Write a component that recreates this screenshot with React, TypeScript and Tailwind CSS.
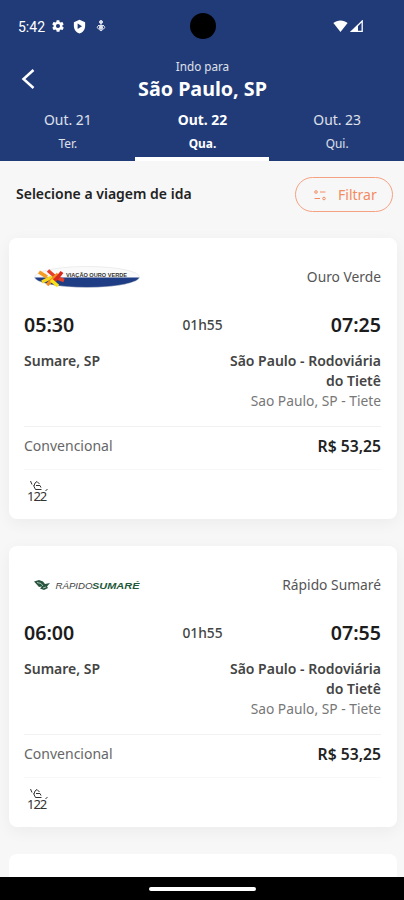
import clsx from 'clsx';

type Day = { date: string; weekday: string; active?: boolean };

type Trip = {
  company: string;
  logo: 'ouroVerde' | 'rapidoSumare';
  departure: string;
  arrival: string;
  duration: string;
  price: string;
};

const DAYS: Day[] = [
  { date: 'Out. 21', weekday: 'Ter.' },
  { date: 'Out. 22', weekday: 'Qua.', active: true },
  { date: 'Out. 23', weekday: 'Qui.' },
];

const TRIPS: Trip[] = [
  {
    company: 'Ouro Verde',
    logo: 'ouroVerde',
    departure: '05:30',
    arrival: '07:25',
    duration: '01h55',
    price: 'R$ 53,25',
  },
  {
    company: 'Rápido Sumaré',
    logo: 'rapidoSumare',
    departure: '06:00',
    arrival: '07:55',
    duration: '01h55',
    price: 'R$ 53,25',
  },
];

const StatusBar = () => (
  <div className="relative flex h-[52px] items-center justify-between pl-[18px] pr-[41px]">
    <div className="flex items-center">
      <span className="w-[33px] pt-[2px] font-['Roboto'] text-[14px] leading-none">5:42</span>
      <svg className="h-[14px] w-[14px]" viewBox="0 0 24 24" fill="currentColor">
        <path d="M19.400 13a7.500 7.500 0 0 0 0-2l2.100-1.600a.5.5 0 0 0 .1-.6l-2-3.500a.5.5 0 0 0-.6-.2l-2.500 1a7.300 7.300 0 0 0-1.700-1l-.4-2.700A.5.5 0 0 0 14 2h-4a.5.5 0 0 0-.5.4l-.4 2.700a7.300 7.300 0 0 0-1.700 1l-2.500-1a.5.5 0 0 0-.6.2l-2 3.500a.5.5 0 0 0 .1.6L4.600 11a7.500 7.500 0 0 0 0 2l-2.100 1.600a.5.5 0 0 0-.1.6l2 3.500c.1.200.4.300.6.200l2.500-1c.5.400 1.100.7 1.700 1l.4 2.700c0 .2.200.4.500.4h4c.2 0 .5-.2.500-.4l.4-2.700c.6-.3 1.200-.6 1.700-1l2.500 1c.2.100.5 0 .6-.2l2-3.500a.5.5 0 0 0-.1-.6zM12 15.500a3.500 3.500 0 1 1 0-7 3.500 3.500 0 0 1 0 7z" />
      </svg>
      <svg className="ml-[7px] h-[15px] w-[15px]" viewBox="0 0 24 24">
        <path fill="currentColor" d="M12 1 3 5v6c0 5.500 3.800 10.700 9 12 5.200-1.300 9-6.500 9-12V5z" />
        <path fill="#213b78" d="m9 7 7 4.500L9 16z" />
      </svg>
      <svg
        className="ml-[8px] h-[12px] w-[12px] opacity-85"
        viewBox="0 0 24 24"
        fill="none"
        stroke="currentColor"
        strokeWidth="2"
      >
        <circle cx="12" cy="4" r="3" fill="currentColor" />
        <path d="M12 7v4M6 11h12M4 15l8 7 8-7-3-4H7z" />
        <path d="M9 13h6v4l-3 2-3-2z" fill="currentColor" />
      </svg>
    </div>
    <div className="flex items-center gap-[2px]">
      <svg className="h-[12px] w-[15px]" viewBox="0 0 15 12" fill="currentColor">
        <path d="M.4 3C4.300-.4 10.700-.4 14.600 3L7.500 12z" />
      </svg>
      <svg className="h-[12px] w-[13px]" viewBox="0 0 13 12">
        <path d="M1.800 11.300h10.400V1z" fill="none" stroke="currentColor" strokeWidth="1.300" />
        <path d="M0 12 8 4.500V12z" fill="currentColor" />
      </svg>
    </div>
    <div className="absolute left-[190px] top-[13px] h-[26px] w-[26px] rounded-full bg-black" />
  </div>
);

const Header = () => (
  <header className="h-[161px] bg-[#213b78] text-white">
    <StatusBar />
    <div className="relative flex h-[56px] flex-col items-center pl-px pt-[6px]">
      <svg
        className="absolute left-[21px] top-[17px] h-[20px] w-[14px]"
        viewBox="0 0 14 20"
        fill="none"
        stroke="currentColor"
        strokeWidth="2.500"
      >
        <path d="M12.500 1 2.500 10l10 9" />
      </svg>
      <span className="text-[11.700px] leading-[16px] text-white/85">Indo para</span>
      <h1 className="text-[19.700px] font-bold leading-[29px]">São Paulo, SP</h1>
    </div>
    <nav className="grid h-[53px] grid-cols-3">
      {DAYS.map(({ date, weekday, active }) => (
        <div
          key={date}
          className={clsx(
            'flex flex-col items-center border-b-4 pl-px pt-[2px]',
            active ? 'border-white font-bold' : 'border-transparent text-white/85',
          )}
        >
          <span className="text-[13.900px] leading-[20px]">{date}</span>
          <span className="mt-[4px] text-[11.900px] leading-[18px]">{weekday}</span>
        </div>
      ))}
    </nav>
  </header>
);

const OuroVerdeLogo = () => (
  <svg className="h-[24px] w-[106px]" viewBox="0 0 106 24">
    <clipPath id="oval">
      <ellipse cx="53" cy="12" rx="52.500" ry="10.500" />
    </clipPath>
    <g clipPath="url(#oval)">
      <rect width="106" height="24" fill="#fafafa" />
      <rect y="12.500" width="106" height="12" fill="#1e3d84" />
    </g>
    <ellipse cx="53" cy="12" rx="52.500" ry="10.500" fill="none" stroke="#ddd" strokeWidth=".5" />
    <g fill="none" strokeWidth="3.600">
      <path d="m5 7 8 5" stroke="#f59a23" />
      <path d="m14 5.500 8 7 8 3" stroke="#e5402a" />
      <path d="m8 17 10-5" stroke="#f7d71e" />
      <path d="m13 20 11-11" stroke="#f28c1e" />
      <path d="m20 16 4-4 4-5" stroke="#d9281e" />
      <path d="m17 15 7 6" stroke="#f9e21a" />
    </g>
    <text
      x="32"
      y="11.500"
      fill="#333"
      fontFamily="Liberation Sans, sans-serif"
      fontSize="6"
      fontWeight="bold"
      textLength="61"
      lengthAdjust="spacingAndGlyphs"
    >
      VIAÇÃO OURO VERDE
    </text>
  </svg>
);

const RapidoSumareLogo = () => (
  <svg className="h-[24px] w-[106px]" viewBox="0 0 106 24">
    <path
      d="M0 8.500 5 7l4 1.500 2 2.500 5-1-3 3.500 1 1.500-4 2-4-1.500 2-2-3 .5z"
      fill="#28553f"
    />
    <path d="m3 9.500 4 1 2 2.500M9 15l3-1" stroke="#b9cbc0" strokeWidth=".9" fill="none" />
    <text
      x="21.500"
      y="16"
      fill="#444"
      fontFamily="Liberation Sans, sans-serif"
      fontSize="9.500"
      fontStyle="italic"
      textLength="37"
      lengthAdjust="spacingAndGlyphs"
    >
      RÁPIDO
    </text>
    <text
      x="58"
      y="16"
      fill="#1f5a3c"
      fontFamily="Liberation Sans, sans-serif"
      fontSize="9.500"
      fontStyle="italic"
      fontWeight="bold"
      textLength="47.500"
      lengthAdjust="spacingAndGlyphs"
    >
      SUMARÉ
    </text>
  </svg>
);

// poltrona + código do assento
const SeatIcon = () => (
  <div className="relative h-[24px] w-[24px] text-[#333]">
    <svg
      className="absolute left-0 top-0 h-[24px] w-[24px]"
      viewBox="0 0 24 24"
      fill="none"
      stroke="currentColor"
      strokeWidth="1"
    >
      <path d="m3.500 2 1.500 3.500M7 7l1-3 2-1.500L12.500 5M6.500 6.500l2 4h6M9 6.500h4l1 2M18.500 11.500l2-1" />
    </svg>
    <span className="absolute left-0 top-[10px] text-[13px] leading-[14px] tracking-[-1px]">
      122
    </span>
  </div>
);

const TripCard = ({ company, logo, departure, arrival, duration, price }: Trip) => (
  <article className="h-[281px] rounded-lg bg-white pl-[15px] pr-[16px] pt-[26px] shadow-[0_4px_16px_rgba(0,0,0,0.05)]">
    <div className="flex h-[26px] items-center justify-between">
      <div className="pl-[10px]">
        {logo === 'ouroVerde' ? <OuroVerdeLogo /> : <RapidoSumareLogo />}
      </div>
      <span className="text-[13.800px] text-[#555]">{company}</span>
    </div>
    <div className="mt-[20px] grid h-[28px] grid-cols-3 items-center text-[#1c1c1c]">
      <span className="text-[19.600px] font-semibold">{departure}</span>
      <span className="pt-[2px] text-center text-[13.800px] font-medium text-[#444]">
        {duration}
      </span>
      <span className="text-right text-[19.600px] font-semibold">{arrival}</span>
    </div>
    <div className="mt-[13px] flex h-[76px] justify-between border-b border-[#f2f2f2] text-[14px] font-semibold leading-[20px] text-[#444]">
      <span>Sumare, SP</span>
      <div className="w-[160px] text-right">
        <p>São Paulo - Rodoviária do Tietê</p>
        <p className="text-[13.800px] font-normal text-[#777]">Sao Paulo, SP - Tiete</p>
      </div>
    </div>
    <div className="flex h-[43px] items-center justify-between border-b border-[#f8f8f8] pb-[6px]">
      <span className="text-[14px] text-[#666]">Convencional</span>
      <span className="pt-[3px] text-[15.700px] font-semibold text-[#222]">{price}</span>
    </div>
    <div className="pl-[3px] pt-[9px]">
      <SeatIcon />
    </div>
  </article>
);

const App = () => {
  return (
    <div className="flex h-[900px] w-[404px] flex-col overflow-hidden bg-[#f7f7f7] font-['Noto_Sans',sans-serif]">
      <Header />
      <main className="min-h-0 flex-1 overflow-hidden">
        <div className="flex h-[77px] items-start justify-between pl-[16px] pr-[11px] pt-[16px]">
          <h2 className="text-[14px] font-semibold leading-[34px] text-[#222]">
            Selecione a viagem de ida
          </h2>
          <button className="flex h-[35px] w-[98px] items-center rounded-full border border-[#f5a283] pl-[18px] text-[14px] text-[#f48a62]">
            <svg
              className="mr-[12px] h-[12px] w-[12px]"
              viewBox="0 0 12 12"
              fill="none"
              stroke="currentColor"
            >
              <circle cx="2" cy="3" r="1.300" />
              <path d="M6 3h5.500M.5 9.500H6" />
              <circle cx="10" cy="9.500" r="1.300" />
            </svg>
            Filtrar
          </button>
        </div>
        <div className="flex flex-col gap-[27px] pl-[9px] pr-[7px]">
          {TRIPS.map((trip) => (
            <TripCard key={trip.company} {...trip} />
          ))}
          <div className="h-[60px] rounded-lg bg-white" />
        </div>
      </main>
      <footer className="flex h-[23px] items-center justify-center bg-black">
        <div className="h-[4px] w-[107px] rounded-full bg-white" />
      </footer>
    </div>
  );
};

export default App;
